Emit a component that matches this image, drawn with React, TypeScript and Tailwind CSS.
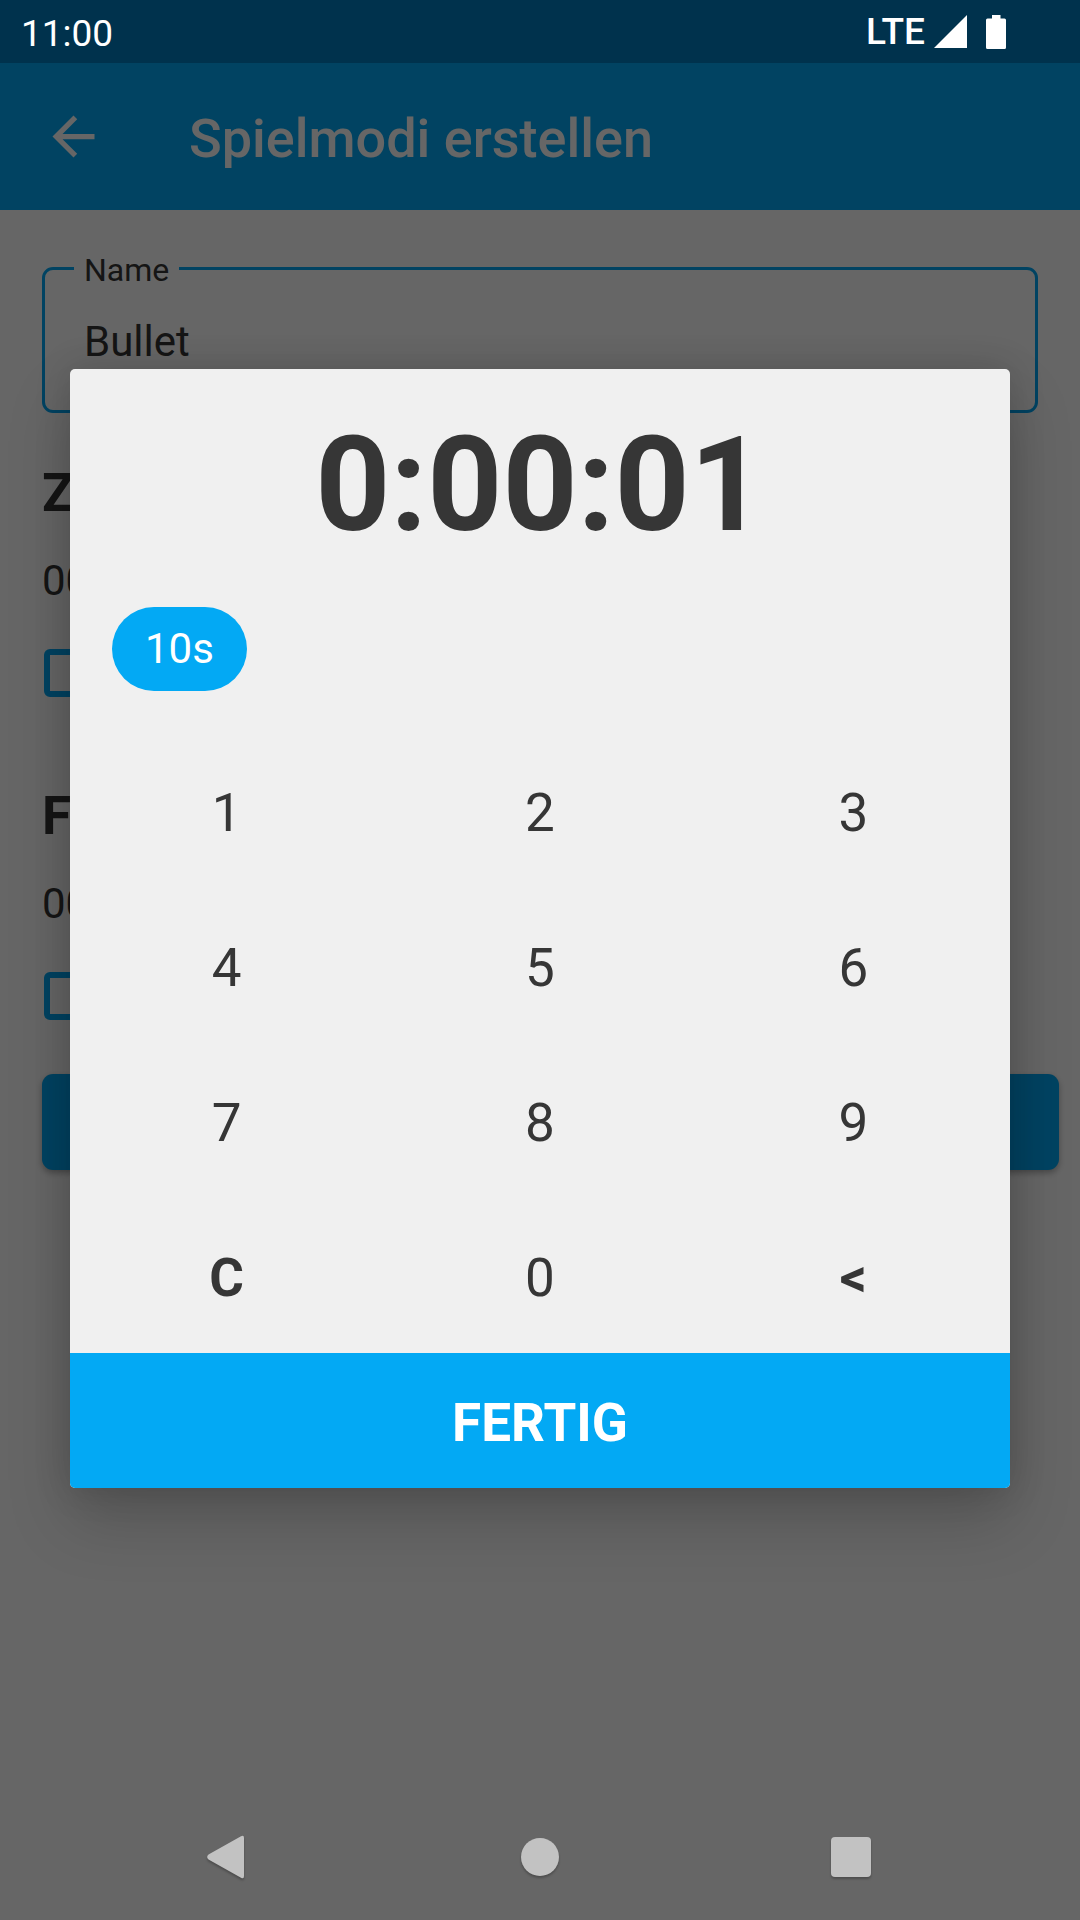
import React from "react";

function StatusBar() {
  return (
    <div className="relative z-20 flex h-[63px] items-center justify-between bg-[#00324d] pr-[74px] pl-[21px] text-[37px] leading-[44px] text-white">
      <span className="pt-1">11:00</span>
      <div className="flex items-center">
        <span className="font-medium">LTE</span>
        <svg className="ml-[9px]" width="33" height="34" viewBox="0 0 33 34" fill="currentColor" aria-hidden="true">
          <path d="M33 0v33H0z" />
        </svg>
        <svg className="ml-[19px]" width="20" height="34" viewBox="0 0 20 34" fill="currentColor" aria-hidden="true">
          <path d="M6 0h8.500v3.500H18.500a1.500 1.500 0 0 1 1.500 1.500v27.500a1.500 1.500 0 0 1-1.500 1.500H1.500a1.500 1.500 0 0 1-1.500-1.500V5a1.500 1.500 0 0 1 1.500-1.500H6z" />
        </svg>
      </div>
    </div>
  );
}

function AppBar() {
  return (
    <header className="flex h-[147px] items-center bg-[#03a9f4] px-[42px] text-white">
      <button type="button" aria-label="Zurück">
        <svg width="63" height="63" viewBox="0 0 24 24" fill="currentColor" aria-hidden="true">
          <path d="M20 11H7.830l5.590-5.590L12 4l-8 8 8 8 1.410-1.410L7.830 13H20v-2z" />
        </svg>
      </button>
      <h1 className="ml-[84px] pt-1 text-[54px] leading-[62px] font-medium">Spielmodi erstellen</h1>
    </header>
  );
}

function Section({ id, title, value }: { id: string; title: string; value: string }) {
  return (
    <section>
      <h2 className="text-[53px] leading-[62px] font-bold">{title}</h2>
      <p className="mt-[33px] text-[42px] leading-[48px]">{value}</p>
      <div className="mt-11 flex h-12 px-0.5">
        <input
          id={id}
          type="checkbox"
          aria-label={title}
          className="size-12 appearance-none rounded-[6px] border-[6px] border-[#03a9f4]"
        />
      </div>
    </section>
  );
}

function GameForm() {
  return (
    <main className="grow px-[42px] pt-12 text-[#363636]">
      <fieldset className="h-[155px] rounded-[11px] border-[3px] border-[#03a9f4] px-[29px]">
        <legend className="px-[10px] pt-1 text-[32px] leading-[16px]">
          <label htmlFor="name">Name</label>
        </legend>
        <input
          id="name"
          type="text"
          defaultValue="Bullet"
          className="mt-10 block h-12 w-full bg-transparent px-[10px] text-[42px] leading-[48px] outline-none"
        />
      </fieldset>
      <div className="mt-[49px] flex flex-col gap-[88px]">
        <Section id="time" title="Z" value="00" />
        <Section id="bonus" title="F" value="00" />
      </div>
      <button
        type="button"
        aria-label="Speichern"
        className="mt-[54px] -mr-[21px] block h-24 w-[calc(100%+21px)] rounded-[11px] bg-[#03a9f4] shadow-[0_3px_6px_rgba(0,0,0,0.3)]"
      />
    </main>
  );
}

const keys = ["1", "2", "3", "4", "5", "6", "7", "8", "9", "C", "0", "<"];

function DurationDialog() {
  return (
    <div className="absolute inset-0 z-10 flex items-center justify-center bg-black/60 px-[70px] pt-[63px] pb-[126px]">
      <div
        role="dialog"
        aria-label="Zeit"
        className="w-full overflow-hidden rounded-[5px] bg-[#f0f0f0] text-[#363636] shadow-[0_32px_64px_rgba(0,0,0,0.18),0_0_36px_rgba(0,0,0,0.15)]"
      >
        <div className="pt-[45px] text-center text-[131px] leading-[142px] font-bold">0:00:01</div>
        <div className="mt-[51px] flex px-[42px]">
          <button type="button" className="h-[84px] rounded-full bg-[#03a9f4] px-[33px] text-[42px] leading-[48px] text-white">
            10s
          </button>
        </div>
        <div className="mt-[42px] grid grid-cols-3">
          {keys.map((key) => (
            <button
              key={key}
              type="button"
              className={
                key === "C" || key === "<"
                  ? "h-[155px] pt-1 text-[53px] leading-[62px] font-bold"
                  : "h-[155px] pt-1 text-[53px] leading-[62px]"
              }
            >
              {key}
            </button>
          ))}
        </div>
        <button type="button" className="h-[135px] w-full bg-[#03a9f4] pt-1 text-[53px] leading-[62px] font-bold text-white">
          FERTIG
        </button>
      </div>
    </div>
  );
}

function NavigationBar() {
  return (
    <nav className="relative z-20 grid h-[126px] grid-cols-3 place-items-center px-[73px] text-[#c2c2c2]">
      <button type="button" aria-label="Zurück" className="drop-shadow-[0_2px_1px_rgba(0,0,0,0.25)]">
        <svg width="44" height="44" viewBox="0 0 44 44" fill="currentColor" aria-hidden="true">
          <path d="M34 1.200Q37-.5 37 3V41Q37 44.500 34 42.800L1.500 24.500Q-1.200 22 1.500 19.500Z" />
        </svg>
      </button>
      <button type="button" aria-label="Startseite" className="size-[38px] rounded-full bg-[#c2c2c2] drop-shadow-[0_2px_1px_rgba(0,0,0,0.25)]" />
      <button type="button" aria-label="Übersicht" className="size-10 rounded-[4px] bg-[#c2c2c2] drop-shadow-[0_2px_1px_rgba(0,0,0,0.25)]" />
    </nav>
  );
}

export default function App() {
  return (
    <div className="relative flex min-h-screen flex-col bg-white font-[Roboto,sans-serif]">
      <StatusBar />
      <AppBar />
      <GameForm />
      <DurationDialog />
      <NavigationBar />
    </div>
  );
}
